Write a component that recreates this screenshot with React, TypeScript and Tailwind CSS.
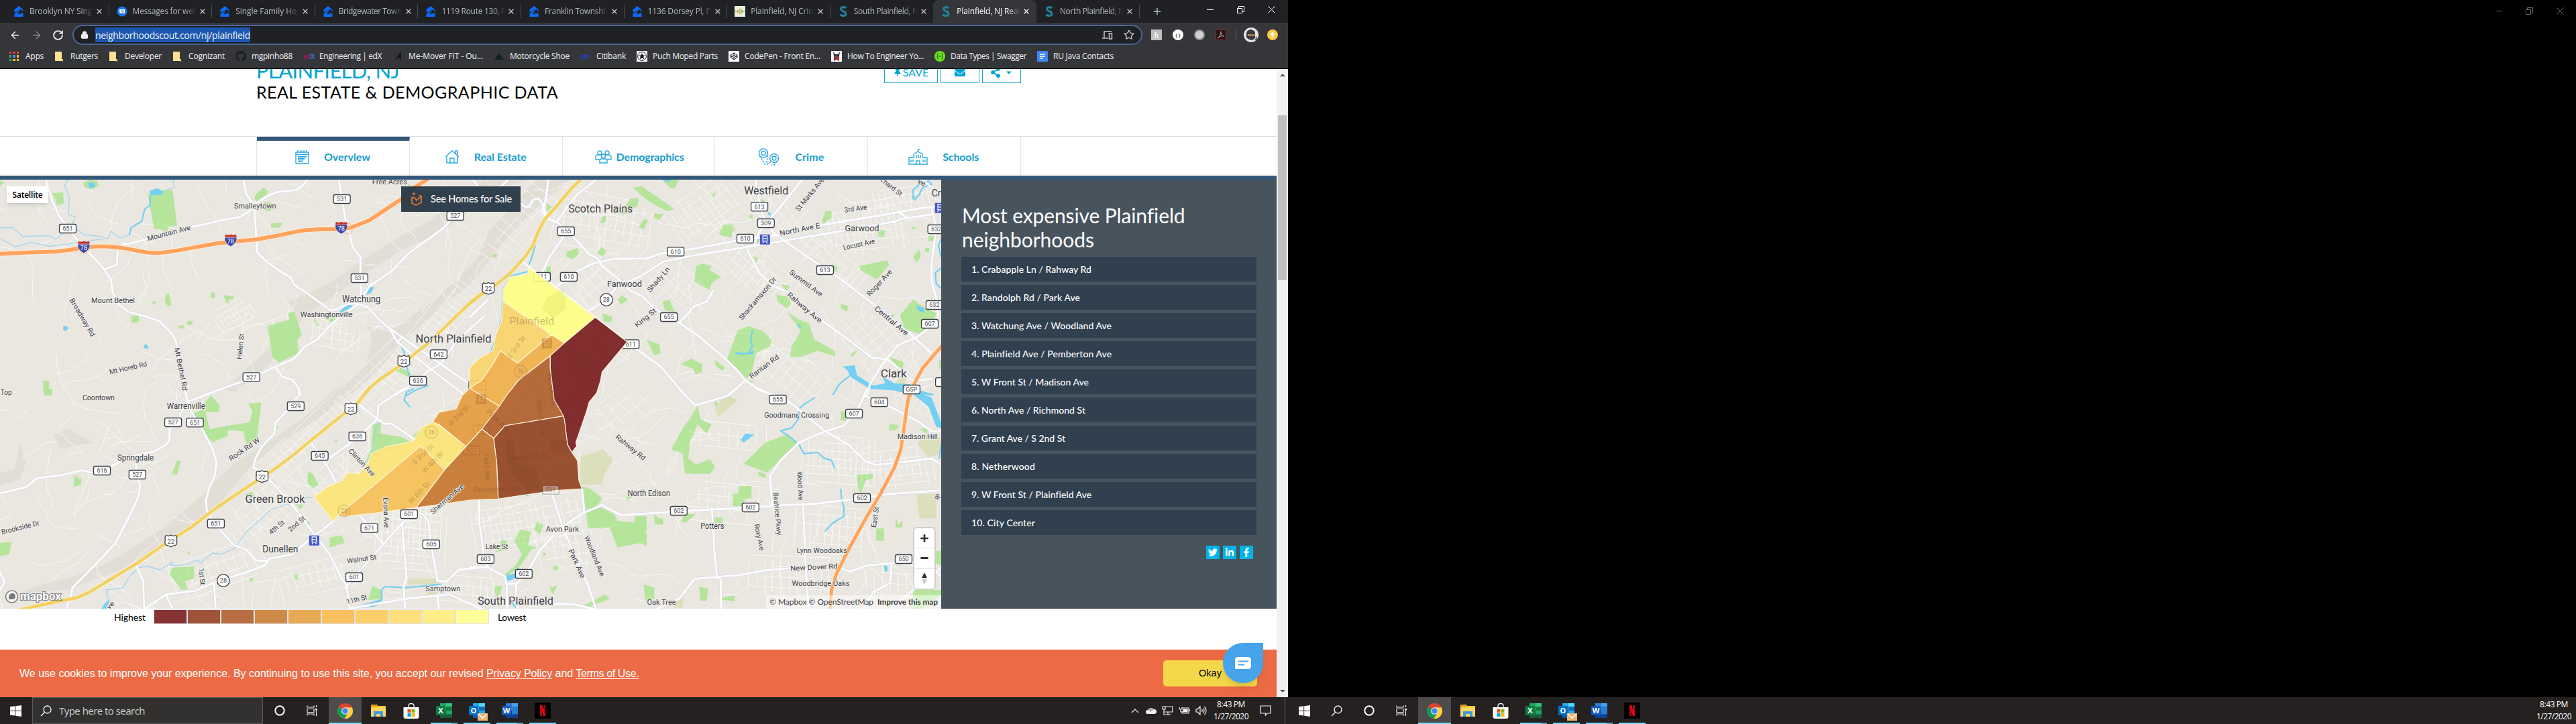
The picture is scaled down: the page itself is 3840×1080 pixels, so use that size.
import { useLayoutEffect, useRef, useState } from "react";
import type { ReactNode } from "react";
import { FaLinkedinIn, FaFacebookF, FaTwitter, FaGithub, FaThumbtack, FaEnvelope, FaShareAlt, FaCaretDown } from "react-icons/fa";
import { Star, Lock, RotateCw, ArrowLeft, ArrowRight, X, Plus } from "lucide-react";

const UI = "font-['Open_Sans','Noto_Sans',sans-serif]";
const LATO = "font-[Lato,sans-serif]";

/** Text tracked so that it fills a given width. */
function Fit({ w, className = "", children }: { w: number; className?: string; children: string }) {
  const ref = useRef<HTMLSpanElement>(null);
  const [ls, setLs] = useState(0);
  useLayoutEffect(() => {
    const natural = ref.current?.getBoundingClientRect().width ?? w;
    setLs((w - natural) / children.length);
  }, []);
  return (
    <span ref={ref} className={"whitespace-nowrap " + className} style={{ letterSpacing: ls }}>
      {children}
    </span>
  );
}

/* ---------------- Browser chrome ---------------- */

function Zillow() {
  return (
    <svg viewBox="0 0 16 16" className="size-4 shrink-0">
      <path d="M8 0 14.500 5.500V8.500L11.500 5 5 8.500 1.500 9V5.500Z" fill="#0b6cff" />
      <path d="M1.500 11 10 7 5.500 12.500 14.500 10.500V16H1.500Z" fill="#0b6cff" />
    </svg>
  );
}
function MsgIcon() {
  return (
    <svg viewBox="0 0 16 16" className="size-4 shrink-0">
      <circle cx="8" cy="8" r="7.6" fill="#1a73e8" />
      <path d="M4 5h8v6H6l-2-1.5Z" fill="#fff" />
      <path d="M6 7h5M6 9h5" stroke="#1a73e8" strokeWidth=".8" />
    </svg>
  );
}
function BarsIcon() {
  return (
    <svg viewBox="0 0 16 16" className="size-4 shrink-0">
      <rect width="16" height="16" fill="#e9f3dc" />
      <path d="M2 7v2M5 6v4M11 5v6M14 7v2" stroke="#6b9b3f" strokeWidth="1.3" />
      <path d="M8 3.5v9M5 6v3" stroke="#ef8a3c" strokeWidth="1.3" />
    </svg>
  );
}
function SIcon() {
  return (
    <svg viewBox="0 0 16 16" className="size-4 shrink-0">
      <path d="M12.4 3.2C10.4 1 4.6 .9 4.6 4.400c0 3.600 7.4 3 7.4 7 0 3.8-6 3.8-8.6 1.400" fill="none" stroke="#1e8099" strokeWidth="3.2" />
    </svg>
  );
}

const tabs: { icon: ReactNode; title: string; w: number; active?: boolean }[] = [
  { icon: <Zillow />, title: "Brooklyn NY Sing", w: 93 },
  { icon: <MsgIcon />, title: "Messages for wel", w: 93 },
  { icon: <Zillow />, title: "Single Family Ho", w: 91 },
  { icon: <Zillow />, title: "Bridgewater Town", w: 94 },
  { icon: <Zillow />, title: "1119 Route 130, P", w: 96 },
  { icon: <Zillow />, title: "Franklin Townshi", w: 90 },
  { icon: <Zillow />, title: "1136 Dorsey Pl, P", w: 94 },
  { icon: <BarsIcon />, title: "Plainfield, NJ Crim", w: 97 },
  { icon: <SIcon />, title: "South Plainfield, N", w: 96 },
  { icon: <SIcon />, title: "Plainfield, NJ Real", w: 94, active: true },
  { icon: <SIcon />, title: "North Plainfield, N", w: 96 },
];

function RestoreIcon() {
  return (
    <svg viewBox="0 0 11 11" className="size-[11px]" fill="none" stroke="currentColor">
      <path d="M.5 3.5h7v7h-7zM2.5 3.5v-3h8v8h-3" />
    </svg>
  );
}

function WindowButtons({ className }: { className: string }) {
  return (
    <div className={"flex items-center " + className}>
      <svg viewBox="0 0 10 11" className="h-[11px] w-2.5"><path d="M0 5.5h10" stroke="currentColor" /></svg>
      <RestoreIcon />
      <svg viewBox="0 0 11 11" className="size-[11px]"><path d="m.5.5 10 10m0-10-10 10" stroke="currentColor" /></svg>
    </div>
  );
}

function TabStrip() {
  return (
    <div className="flex h-[34px] bg-[#202124] pl-[9px]">
      {tabs.map((t, i) => (
        <div key={i} className={"relative flex h-[34px] w-[153.6px] shrink-0 items-center pl-[11px] " + (t.active ? "rounded-t-lg bg-[#35363a]" : "")}>
          {t.icon}
          <div className={"ml-2 w-[98px] whitespace-nowrap text-[12px] [mask-image:linear-gradient(90deg,#000_78%,transparent_97%)] " + (t.active ? "text-white" : "text-[#b4b7bb]")}>
            <Fit w={t.w}>{t.title}</Fit>
          </div>
          <X className={"size-3 shrink-0 " + (t.active ? "text-white" : "text-[#c3c6ca]")} strokeWidth={2.6} />
          {!t.active && i !== 8 && <div className="ml-auto h-5 w-px bg-[#4a4c50]" />}
        </div>
      ))}
      <div className="flex w-[60px] items-center pl-[18px] text-[#c3c6ca]"><Plus className="size-4" strokeWidth={2} /></div>
      <WindowButtons className="ml-auto h-7 gap-[35px] pr-[19px] text-white" />
    </div>
  );
}

function Toolbar() {
  return (
    <div className="flex h-[36px] items-center bg-[#35363a] text-[#f1f3f4]">
      <ArrowLeft className="ml-3.5 size-[17px]" />
      <ArrowRight className="ml-[15px] size-[17px] text-[#86888c]" />
      <RotateCw className="ml-[15px] size-[17px]" strokeWidth={2.6} />
      <div className="ml-[13px] flex h-[30px] w-[1595px] items-center rounded-full border-2 border-[#4a6596] bg-[#202124]">
        <Lock className="ml-2.5 size-3" fill="#e8eaed" strokeWidth={2.5} />
        <div className="ml-[10px] flex h-[22px] w-[231px] items-center bg-[#1b57b0] text-[14px]">
          <Fit w={231}>neighborhoodscout.com/nj/plainfield</Fit>
        </div>
        <svg viewBox="0 0 16 14" className="ml-auto h-3.5 w-4" fill="none" stroke="#c9cbcf" strokeWidth="1.5"><path d="M14 2H3v9M0 12h9M10.5 5h4v8h-4z" /></svg>
        <Star className="mr-2.5 ml-4 size-4 text-[#c9cbcf]" />
      </div>
      <div className="ml-[13px] flex size-4 items-center justify-center bg-[#bfbfbf] font-serif text-[13px] italic leading-none text-white">h</div>
      <div className="ml-4 flex size-4 items-center justify-center rounded-full bg-white text-[8px] text-black">{"{·}"}</div>
      <div className="ml-4 size-4 rounded-full border-2 border-[#8d8d8d] bg-[#d2d2d2]" />
      <div className="ml-4 flex size-4 items-center justify-center border border-[#8d2a26] bg-[#2a1616]">
        <svg viewBox="0 0 12 12" className="size-3" fill="none" stroke="#aaa"><path d="M1 11C4 9 6 5 6 1c0 4 2 7 5 7-4-1-6 0-10 3" /></svg>
      </div>
      <div className="ml-[14px] h-4 w-px bg-[#5f6165]" />
      <svg viewBox="0 0 22 22" className="ml-[11px] size-[22px]">
        <circle cx="11" cy="11" r="11" fill="#e4e4e4" />
        <path d="M4 9a6 5.500 0 0 1 13 0v7l-4 3-5-1-4-3Z" fill="#3a3a3e" /><path d="M6 10h10v3H6z" fill="#d9a26b" /><path d="M7 11.200h8" stroke="#333" /><path d="M18 14q2 3-1 5" stroke="#2c2c2f" strokeWidth="1.500" fill="none" />
      </svg>
      <svg viewBox="0 0 16 16" className="ml-[13px] size-4"><circle cx="8" cy="8" r="8" fill="#f9c846" /><path d="M8 3.5 12 8H9.4v4H6.6V8H4Z" fill="#fff" /></svg>
    </div>
  );
}

const appColors = ["bg-[#e5453a]", "bg-[#e5453a]", "bg-[#e5453a]", "bg-[#3fa557]", "bg-[#4687f1]", "bg-[#f4bd2a]", "bg-[#3fa557]", "bg-[#f4bd2a]", "bg-[#f4bd2a]"];
function Folder() {
  return (
    <svg viewBox="0 0 14 16" className="mr-0.5 h-4 w-3.5"><path d="M1 1h10v11l2 1v2H1Z" fill="#fde293" /><path d="M11 12v4l2-1v-3Z" fill="#e6c15a" /></svg>
  );
}
const bookmarks: { icon: ReactNode; label: string; w: number }[] = [
  { icon: <div className="mr-0.5 grid size-3.5 grid-cols-3 gap-[2px]">{appColors.map((c, i) => <i key={i} className={c} />)}</div>, label: "Apps", w: 27 },
  { icon: <Folder />, label: "Rutgers", w: 41 },
  { icon: <Folder />, label: "Developer", w: 55 },
  { icon: <Folder />, label: "Cognizant", w: 54 },
  { icon: <FaGithub className="size-4 text-[#1b1c1e]" />, label: "mgpinho88", w: 61 },
  { icon: <div className="flex w-4 text-[10px] font-bold leading-4 tracking-[-1px]"><b className="text-[#8f1f4a]">ed</b><b className="text-[#1d72b8]">X</b></div>, label: "Engineering | edX", w: 93 },
  { icon: <svg viewBox="0 0 14 16" className="size-4"><path d="M12 1v12L7 10 1 14Z" fill="#151617" /></svg>, label: "Me-Mover FIT - Ou...", w: 111 },
  { icon: <svg viewBox="0 0 16 16" className="size-4"><path d="m8 3 7 10H1Z" fill="#12231f" /></svg>, label: "Motorcycle Shoe", w: 89 },
  { icon: <div className="w-4 text-[11px] font-bold italic leading-4 tracking-[-1px] text-[#2a3fb8]">citi</div>, label: "Citibank", w: 44 },
  { icon: <svg viewBox="0 0 16 16" className="size-4"><rect width="16" height="16" fill="#fff" /><circle cx="8" cy="8" r="6.4" fill="none" stroke="#111" /><path d="m8 3 1.4 3.4H13l-2.8 2.2 1 3.8L8 10.200l-3.200 2.200 1-3.800L3 6.400h3.600Z" fill="#111" /></svg>, label: "Puch Moped Parts", w: 97 },
  { icon: <svg viewBox="0 0 16 16" className="size-4"><rect width="16" height="16" fill="#fff" /><path d="m8 3 5 3.300v3.400L8 13 3 9.700V6.300ZM3 6.300l5 3.400 5-3.400M3 9.700l5-3.400 5 3.400M8 3v3.300M8 9.700V13" fill="none" stroke="#111" /></svg>, label: "CodePen - Front En...", w: 113 },
  { icon: <svg viewBox="0 0 16 16" className="size-4"><rect width="16" height="16" fill="#fff" /><path d="m3 1 3 4h4l3-4-1 7H4Z" fill="#333" /><path d="M4 8h8v7l-4-2-4 2Z" fill="#b02a33" /><path d="M6 7h4v3H6z" fill="#555" /></svg>, label: "How To Engineer Yo...", w: 114 },
  { icon: <svg viewBox="0 0 16 16" className="size-4"><circle cx="8" cy="8" r="8" fill="#6de018" /><path d="M6 4c-3 0 0 3-2.500 4C6 9 3 12 6 12M10 4c3 0 0 3 2.500 4-2.500 1 .5 4-2.500 4M6 8h4" fill="none" stroke="#173647" /></svg>, label: "Data Types | Swagger", w: 113 },
  { icon: <svg viewBox="0 0 16 16" className="size-4"><rect width="16" height="16" rx="1" fill="#4285f4" /><path d="M4 5h8M4 8h8M4 11h5" stroke="#fff" strokeWidth="1.500" /></svg>, label: "RU Java Contacts", w: 90 },
];

function BookmarkBar() {
  return (
    <div className="flex h-[33px] items-center gap-4 border-b border-black bg-[#35363a] pb-1 pl-[14px] text-[12px] text-[#f1f3f4]">
      {bookmarks.map((b) => (
        <div key={b.label} className="flex items-center gap-2">
          {b.icon}
          <Fit w={b.w}>{b.label}</Fit>
        </div>
      ))}
    </div>
  );
}

/* ---------------- Map ---------------- */

type CropId = "A" | "B" | "C" | "D";
const K = 720 / 1568;
const origin: Record<CropId, [number, number]> = { A: [0, 260], B: [700, 260], C: [0, 580], D: [700, 580] };
const tile = (c: CropId) => `translate(${origin[c][0]} ${origin[c][1]}) scale(${K} ${1 / 3})`;
const px = (c: CropId, x: number) => origin[c][0] + x * K;
const py = (c: CropId, y: number) => origin[c][1] + y / 3;

const roads: Record<CropId, string[]> = {
  A: [
    "148,24 160,75 170,120 190,180 215,230 240,275 272,330 310,380 338,425 360,470 366,530 385,580 415,615 470,635 515,655 550,700 570,740 575,780 600,965",
    "338,425 380,405 382,330 395,315 430,308 500,280 580,255 620,235 660,225 720,205 780,190 810,165 830,130 870,95 900,80 960,70 985,48 997,24",
    "790,24 800,90 825,140 830,240 835,350 870,395 910,435 945,462 955,495 1000,535 1075,610 1100,600 1130,580 1165,578",
    "1100,24 1110,110 1120,190 1145,325 1170,370 1170,470 1172,540",
    "1568,110 1480,180 1440,240 1330,350 1270,435 1200,500 1175,550 1165,580",
    "1165,580 1130,610 1085,660 1055,700 1030,740 990,770 955,825 895,860 800,920 660,990",
    "895,865 915,905 950,920 970,960 975,990",
    "1165,580 1195,595 1230,650 1265,690 1290,750 1350,820 1510,990",
    "1270,695 1400,820 1568,980", "1305,730 1290,752",
    "1568,640 1480,750 1430,850 1390,880 1350,930 1280,990", "1440,690 1490,760",
  ],
  B: [
    "255,24 250,90 240,150 255,200 285,215 330,270 390,360 415,375 430,410 480,465 520,520 560,545 600,600 680,665 740,720 830,825 870,880 895,920 930,955 990,990",
    "412,24 350,90 320,140 285,210", "305,280 260,370 235,440", "165,385 190,410 408,640 540,780 620,860 700,990",
    "0,640 60,560", "390,610 440,565 480,500 550,460 630,390 740,360 900,325 1030,295 1160,265 1380,212 1400,200 1500,180",
    "285,500 340,440 400,400 470,378 575,377 620,355 740,330 860,298 930,285 1010,270 1140,228 1350,180 1390,170 1470,150 1520,145",
    "1390,165 1420,195", "928,24 935,80 950,180 970,225", "1080,24 1000,160 975,200 940,260 920,320",
    "970,225 985,260 1050,325 1130,400 1200,465 1320,590 1400,680 1450,740 1500,800",
    "900,335 940,440 985,500 1040,530 1150,660 1230,740 1310,825", "1310,820 1360,830 1420,900 1440,925 1500,915",
    "1500,150 1515,240 1500,400 1500,480 1520,580 1520,640 1490,690 1450,730 1390,765 1340,850 1300,940 1290,990",
    "680,665 730,590 770,570 790,520", "895,920 870,955 840,985", "155,120 180,145 195,145 205,115 225,108 240,140 235,170 265,205",
    "10,24 50,90", "125,24 90,70", "1470,24 1500,60 1531,80",
  ],
  C: [
    "720,0 605,60 570,160 550,180 550,230 540,250 500,280 420,305 350,355 300,375 265,365 205,385 120,400 85,440 0,468",
    "598,0 620,100 660,190 690,270 703,330 697,390 680,440 668,500 672,550 700,610 760,700 800,720 830,768 865,770",
    "970,0 970,30 930,100 895,150 890,200 850,260 830,310 822,350 870,400 950,520 1025,660 1070,740 1110,850 1125,880 1135,984",
    "440,320 445,390 455,430 450,480 420,570 375,690 300,800 235,890 232,920 215,984",
    "470,984 540,920 630,905 690,870 800,820 860,790 875,760 950,740 1000,680 1080,595",
    "1165,70 1225,135 1250,158 1270,155 1340,220 1365,250", "1310,0 1228,75 1225,135 1160,220 1060,320", "1010,240 1060,340 1090,415",
    "1170,570 1245,695", "1370,560 1390,590 1400,700 1420,860 1450,862 1490,810 1568,798",
    "1350,540 1300,610 1245,695 1120,890", "1305,600 1320,850 1310,880 1315,984", "1135,984 1250,955 1330,938 1460,920 1560,984",
    "440,785 465,860 468,984", "0,820 15,865 0,900", "540,925 560,984", "695,870 700,984", "1420,920 1425,984",
  ],
  D: [
    "680,0 730,72 750,68 840,30 865,0", "930,0 1000,35 1050,70 1100,130 1155,190 1230,250 1285,325 1320,340 1390,330 1500,312 1531,340",
    "1290,0 1265,80 1215,165 1155,190 1070,240 1010,320 975,390 982,520", "1280,30 1380,90 1460,150 1500,190 1531,189",
    "320,600 370,555 430,520 490,565 650,552 780,540 870,535 1000,522 1120,515 1240,495 1370,470 1531,455",
    "320,600 270,660 230,720 200,790 155,870 120,875 115,840 60,800 0,798", "365,450 373,555", "268,470 300,610 345,760 385,880 410,984",
    "787,540 795,730 803,845 815,850 817,984", "1083,520 1090,760 1100,984", "610,984 680,940 730,850 880,833 960,812 1040,803",
    "1200,800 1235,818 1290,790 1380,780 1440,775", "1370,785 1365,870 1310,910 1280,984", "30,500 32,600 50,780 60,800",
    "120,875 122,984", "150,875 155,984", "270,965 340,965 400,984", "0,960 40,984", "1531,800 1515,820 1531,840", "1440,900 1370,984",
  ],
};

const greens: Record<CropId, string[]> = {
  A: [
    "500,75 560,70 575,230 545,235 545,262 520,245 500,245 490,165 480,90", "170,85 205,80 207,130 185,140 178,105", "270,40 290,24 315,30 320,50 300,68 275,58",
    "830,90 855,60 870,75 868,100 835,128 826,110", "868,680 900,665 940,650 935,620 955,615 980,720 965,740 970,800 905,842 885,820", "538,540 548,530 557,585 545,590 535,570",
    "880,220 920,215 905,240 880,238", "685,528 698,530 697,555 685,553", "725,540 760,545 755,560 740,562 745,580 735,575", "425,635 450,630 452,660 428,665",
    "580,678 598,675 597,690 580,690", "605,660 625,655 625,672 610,675", "138,925 160,925 160,960 170,990 145,990", "1065,645 1085,640 1090,660 1070,662",
    "1300,865 1335,890 1330,910 1285,880", "855,125 880,125 880,165 862,165", "0,26 15,40 0,52", "495,568 508,570 505,582 495,578", "1020,645 1030,660 1020,665", "1025,665 1038,672 1030,680", "1325,40 1332,50 1325,55",
  ],
  B: [
    "530,60 560,55 665,155 640,165 580,120", "520,110 550,105 545,140 505,180 490,175", "430,190 445,185 440,215 425,220", "600,175 630,180 615,205 598,195",
    "565,200 580,205 565,245 548,240", "315,345 350,330 355,355 335,382 315,370", "430,325 445,345 430,368 413,350", "735,410 755,400 785,410 780,430 815,460 785,490 780,518 730,480",
    "825,225 855,225 850,285 808,270", "1155,165 1175,165 1175,195 1150,220 1143,210", "1265,410 1355,385 1362,405 1322,470 1270,430",
    "1440,560 1480,600 1515,620 1500,690 1460,715 1410,690 1398,630", "1070,650 1100,665 1120,740 1185,790 1185,815 1130,790 1070,820 1040,815 1045,770 1075,700 1030,615",
    "870,700 905,680 950,700 980,740 975,770 930,800 915,890 895,920 835,830", "995,540 1030,545 1045,580 1030,600 1000,570", "685,850 720,825 755,850 755,885 735,895 725,870",
    "575,740 615,760 620,800 600,810", "795,830 830,865 820,878 800,860", "1365,820 1410,840 1405,870 1370,850", "1240,800 1260,785 1250,810 1238,818", "480,560 495,540 512,560 492,585",
    "625,570 650,560 665,615 635,610", "1205,580 1230,590 1225,615 1205,600", "1440,370 1460,335 1465,370 1450,395", "1325,250 1350,250 1345,280 1328,280", "75,360 90,355 88,370 75,372",
    "250,125 268,150 250,165", "920,365 938,375 930,395", "1010,490 1040,500 1030,525", "430,620 465,640 460,660 435,660", "625,24 680,24 665,65 650,60", "905,185 918,180 920,200 910,195",
    "945,110 960,120 950,130", "250,415 262,410 265,440 248,440", "1435,100 1450,95 1445,115", "785,90 800,80 795,105", "1490,275 1510,275 1508,298 1490,298", "1480,330 1495,330 1490,350 1478,345", "1525,830 1531,830 1531,880 1522,860",
    "1180,405 1195,415 1190,440 1178,430", "1140,330 1150,335 1145,345", "930,285 945,290 935,310", "1435,230 1450,240 1440,250", "1370,625 1380,630 1370,645", "905,920 920,925 915,938",
  ],
  C: [
    "805,65 848,62 835,220 800,250 790,190 740,185 740,210 690,240 655,190 625,110 665,90 680,180 740,165 810,150 820,100", "665,60 685,30 715,75 710,105 670,105", "575,320 587,325 575,385 558,380",
    "240,395 265,400 262,430 238,440", "1000,370 1015,380 1035,430 1015,445 998,420", "1210,160 1237,150 1235,200 1300,215 1340,240 1220,290 1185,330 1205,270", "560,800 630,795 630,850 600,860 610,900 590,900 550,830",
    "1070,665 1110,655 1118,690 1070,710", "1210,880 1235,900 1240,940 1195,945", "808,850 822,845 822,862 808,862", "955,832 968,832 966,855 955,850", "0,690 38,685 30,740 0,750", "140,0 170,0 170,30 145,28",
    "990,600 1003,592 1008,605 996,612", "1085,230 1098,225 1092,240", "605,725 618,735 612,745", "960,515 985,520 975,540", "795,470 820,460 825,485 805,490", "1340,210 1390,150 1365,180 1345,235", "885,160 905,170 900,180",
  ],
  D: [
    "740,75 712,140 690,180 655,270 690,290 700,380 780,380 798,350 780,315 735,340 710,310 715,240 740,160 770,200 785,160 750,135", "960,240 1030,205 1070,245 1000,330 965,375 890,335",
    "365,435 395,450 430,490 415,525 470,560 480,590 540,600 575,650 575,705 555,690 480,710 455,620 385,625", "875,435 915,435 915,490 895,495 885,525 855,525 855,470 870,470",
    "1258,385 1310,380 1310,400 1285,410 1270,470 1260,440", "1320,625 1345,625 1345,680 1320,680", "165,630 200,640 190,700 220,710 200,720 160,800 120,840 110,835 150,790 170,740 145,680",
    "565,875 600,890 600,940 570,950", "745,885 775,895 770,950 750,950", "370,970 440,920 455,940 400,970 380,984", "220,595 240,610 230,650 208,630", "700,560 735,560 700,600 685,595",
    "1385,575 1390,610 1405,590 1405,620 1382,620", "600,560 615,580 628,580 628,608 600,605", "795,575 822,575 820,600 795,600", "1365,155 1395,165 1385,185 1360,185", "1440,900 1531,900 1531,920 1470,984 1440,984",
    "1515,725 1531,725 1531,790 1512,780", "105,675 120,680 125,720 85,730", "80,885 105,880 100,920 85,930", "275,790 290,800 280,815 270,805", "820,935 860,925 860,950 820,945", "935,370 960,380 960,400 940,390",
    "535,570 575,570 575,640 538,640", "1205,100 1220,105 1222,145 1205,140", "515,450 530,480 510,500", "240,730 250,740 240,750", "1460,180 1490,175 1485,200", "795,55 805,60 805,75 795,75", "260,890 285,880 270,920",
  ],
};

const olives: Record<CropId, string[]> = {
  A: [],
  B: ["845,235 865,240 860,260 845,255", "1400,905 1420,920 1410,945 1385,930"],
  C: ["1325,850 1425,850 1425,875 1325,875", "1385,905 1420,905 1420,925 1385,922", "235,385 258,385 255,400 238,400"],
  D: ["430,270 465,310 460,340 440,375 430,430 360,430 360,300 395,290", "1470,200 1530,220 1530,290 1490,305 1455,250", "840,30 870,50 810,125 795,90 815,50", "1450,470 1515,470 1515,580 1460,580", "670,940 695,935 690,980 665,980"],
};

const lakes: Record<CropId, string[]> = {
  A: ["285,40 305,35 310,55 290,62", "485,75 510,62 528,75 525,92 490,95", "1188,540 1200,505 1215,505 1205,530", "1100,620 1130,575 1145,580 1140,605 1118,610 1090,645", "205,680 215,678 222,690 212,702 205,695", "467,765 475,760 483,780 467,778"],
  B: [
    "1210,860 1250,855 1258,900 1310,945 1350,935 1340,905 1380,935 1430,940 1440,960 1510,985 1500,990 1405,970 1300,960 1240,910 1225,875", "1450,585 1475,600 1475,620 1455,610",
    "860,795 905,800 925,785 920,805 870,808", "965,165 978,175 975,190", "1060,670 1075,675 1075,690", "625,24 655,24 645,35",
  ],
  C: ["1135,984 1240,940 1238,960 1215,975", "340,960 358,940 345,984 330,984"],
  D: ["1360,0 1410,0 1450,10 1500,40 1531,150 1531,175 1515,170 1490,80 1440,25 1400,15", "880,230 895,200 925,205 910,220 890,240", "120,835 150,825 155,800 160,800 155,845 120,862", "1345,790 1358,795 1355,820 1348,815", "175,475 195,470 190,482"],
};

const streams: Record<CropId, string[]> = {
  A: ["487,100 487,140 470,155 460,210 425,240 420,270", "1300,760 1313,800 1310,840", "1320,860 1330,905", "1390,945 1350,965 1320,990"],
  B: ["918,700 912,740 918,770 905,800", "1440,110 1440,70 1460,45 1490,30 1500,45 1470,60 1460,90 1445,115", "1245,860 1235,900 1200,940 1180,985", "213,320 200,380 190,410", "1531,420 1512,440 1515,490 1531,510", "1531,290 1522,320 1531,370", "135,455 190,435", "130,460 108,520 105,640 90,720 70,790"],
  C: ["1342,0 1320,15 1312,50 1330,80", "1240,940 1238,900 1250,885 1320,890 1430,875"],
  D: ["1120,40 1085,70 1070,90 1070,130 1045,175 1010,188 1035,210 1070,250 1085,290 1130,285 1150,310 1175,320 1185,355", "1205,450 1208,500 1215,530 1215,570 1180,600 1155,635", "135,955 155,984", "1531,250 1525,310"],
};
const faintStreams: Record<CropId, string[]> = {
  A: ["0,240 40,238 75,278 160,275 180,290 230,240 245,190 222,180 225,100 210,50 220,24", "0,285 50,325 100,305 160,322 230,310 330,290 350,285 360,255 390,285 420,270", "528,75 565,60 562,24", "245,240 270,270 335,280"],
  B: [],
  C: ["345,900 400,890 420,840 450,800 480,795 520,810 560,775 555,790 580,790 610,785 640,765 650,780 690,735 720,740 760,715 800,640 850,580 880,540 950,510 985,490 1020,485", "345,900 350,940", "1225,150 1215,210 1213,280 1190,330"],
  D: [],
};

const overlays: [string, string][] = [
  ["190,415 408,640 308,755 265,718 108,568 108,520 130,460 190,445", "#feff82"],
  ["108,568 265,718 155,845 100,790 75,850 40,920 0,958 0,865 30,825 75,790 85,720 103,660", "#fbd468"],
  ["100,790 155,845 265,718 308,755 262,812 160,920 120,990 97,1038 0,958 40,920 75,850", "#f2ae46"],
  ["0,958 97,1038 40,1140 -12,1218 -99,1120 -120,1108 -99,1065 -44,1050 -24,990", "#e49a3b"],
  ["262,812 262,870 270,960 275,1010 305,1082 115,1125 78,1182 40,1140 97,1038 120,990 160,920", "#ae5c27"],
  ["408,640 512,750 430,885 425,925 412,980 388,1020 380,1060 355,1160 345,1200 348,1215 332,1245 318,1210 305,1082 275,1010 262,870 262,812 308,755", "#77181b"],
  ["115,1125 305,1082 308,1100 318,1210 332,1245 350,1280 355,1370 365,1407 280,1415 130,1445 93,1453 88,1290 78,1182", "#91401e"],
  ["-12,1218 40,1140 78,1182 88,1290 93,1453 0,1458 -60,1470 -174,1492 -81,1322", "#c6742b"],
  ["-159,1215 -81,1322 -174,1492 -304,1515 -409,1532 -429,1528", "#f6c052"],
  ["-120,1108 -99,1122 -12,1218 -81,1322 -159,1215 -429,1528 -441,1555 -506,1445 -464,1400 -414,1370 -394,1335 -359,1340 -329,1290 -319,1250 -274,1220 -184,1195 -159,1135", "#fce473"],
];

/* [tile, centre x, centre y, width, text, font size, angle] */
type L = [CropId, number, number, number, string, number, number?];
const labels: L[] = [
  ["A", 828, 142, 63, "Smalleytown", 11.5], ["A", 367, 564, 65, "Mount Bethel", 11.5], ["A", 1173, 558, 57, "Watchung", 14], ["A", 1060, 628, 78, "Washingtonville", 11.5],
  ["A", 1265, 34, 52, "Free Acres", 11.5], ["A", 548, 262, 66, "Mountain Ave", 10.5, -15], ["A", 268, 640, 64, "Broadway Rd", 10.5, 59], ["A", 416, 866, 57, "Mt Horeb Rd", 10.5, -13],
  ["A", 780, 770, 38, "Helen St", 10.5, -84], ["A", 588, 872, 65, "Mt Bethel Rd", 10.5, 79], ["B", -52, 736, 113, "North Plainfield", 16],
  ["B", 425, 155, 96, "Scotch Plains", 16], ["B", 963, 72, 66, "Westfield", 16], ["B", 503, 488, 52, "Fanwood", 13.5], ["B", 1274, 240, 51, "Garwood", 13.5], ["B", 1377, 891, 39, "Clark", 17], ["B", 1515, 84, 14, "Cr", 15],
  ["B", 1104, 90, 61, "St Marks Ave", 10.5, -51], ["B", 1370, 55, 38, "chard St", 10.5, 38], ["B", 1253, 153, 34, "3rd Ave", 10.5, -8], ["B", 1072, 246, 61, "North Ave E", 11, -11], ["B", 1264, 313, 48, "Locust Ave", 10.5, -12],
  ["B", 613, 470, 45, "Shady Ln", 10.5, -49], ["B", 935, 555, 80, "Shackamaxon Dr", 10.5, -50], ["B", 1093, 487, 59, "Summit Ave", 10.5, 37], ["B", 1088, 596, 64, "Rahway Ave", 11, 40], ["B", 1330, 485, 50, "Roger Ave", 10.5, -47],
  ["B", 1370, 655, 62, "Central Ave", 11, 40], ["B", 571, 642, 38, "King St", 10.5, -40], ["B", 956, 860, 52, "Raritan Rd", 10.5, -37], ["B", 1468, 36, 12, "ve", 10.5, 30],
  ["C", 20, 15, 17, "Top", 11.5], ["C", 320, 40, 48, "Coontown", 11.5], ["C", 604, 76, 57, "Warrenville", 12], ["C", 440, 308, 54, "Springdale", 12], ["C", 893, 491, 89, "Green Brook", 16.5], ["C", 910, 718, 53, "Dunellen", 14],
  ["C", 793, 270, 53, "Rock Rd W", 10.5, -34], ["C", 66, 620, 58, "Brookside Dr", 10.5, -14], ["C", 898, 619, 27, "4th St", 10.5, -39], ["C", 963, 604, 30, "2nd St", 10.5, -40], ["C", 1174, 761, 44, "Walnut St", 10.5, -8],
  ["C", 1254, 554, 45, "Evona Ave", 10.5, 88], ["C", 656, 840, 25, "1st St", 10.5, 85], ["C", 1158, 942, 31, "11th St", 10.5, -14], ["C", 1438, 895, 52, "Samptown", 11.5], ["C", 1175, 329, 52, "Clinton Ave", 10.5, 46], ["C", 1451, 493, 62, "Sherman Ave", 10.5, -41], ["C", 358, 968, 12, "ve", 10.5, -45],
  ["D", 1062, 116, 97, "Goodmans Crossing", 11.5], ["D", 1454, 212, 60, "Madison Hill", 11.5], ["D", 582, 468, 63, "North Edison", 12], ["D", 788, 614, 35, "Potters", 12], ["D", 301, 628, 49, "Avon Park", 11.5], ["D", 88, 704, 34, "Lake St", 11.5],
  ["D", 149, 947, 113, "South Plainfield", 16.5], ["D", 623, 954, 43, "Oak Tree", 11.5], ["D", 1144, 723, 75, "Lynn Woodoaks", 11.5], ["D", 1118, 798, 70, "New Dover Rd", 10.5, -3], ["D", 1140, 871, 86, "Woodbridge Oaks", 11.5],
  ["D", 523, 262, 54, "Rahway Rd", 10.5, 39], ["D", 1074, 434, 43, "Wood Ave", 10.5, 87], ["D", 1000, 559, 64, "Beatrice Pkwy", 10.5, 85], ["D", 941, 664, 40, "Roxy Ave", 10.5, 78], ["D", 1316, 574, 31, "East St", 10.5, -82],
  ["D", 406, 748, 64, "Woodland Ave", 10.5, 68], ["D", 349, 782, 46, "Park Ave", 11, 66], ["D", 1520, 484, 8, "Br", 10.5, 35],
];
const faintLabels: L[] = [
  ["B", 202, 655, 67, "Plainfield", 15], ["B", 152, 772, 39, "E 3rd St", 10.5, -54], ["B", 348, 808, 50, "eland Ave", 10.5, 37], ["B", 268, 960, 50, "Woodla", 11, 82],
  ["D", 93, 144, 44, "Park Ave", 11, 45], ["D", 232, 128, 52, "Hillside Ave", 10.5, 84], ["D", 196, 303, 57, "Randolph Rd", 10.5, -5], ["D", 57, 350, 40, "Field Ave", 10.5, 86], ["D", 87, 449, 68, "Pemberton Ave", 10.5, -2], ["D", 292, 82, 30, "nd Ave", 11, 66],
  ["C", 1488, 120, 40, "W 2nd St", 10.5, -46], ["C", 1373, 292, 40, "S 2nd St", 10.5, -43], ["C", 1404, 328, 40, "W 4th St", 10.5, -46], ["C", 1360, 463, 41, "W 6th St", 10.5, -46],
];

const shields: [CropId, number, number, string][] = [
  ["A", 220, 243, "651"], ["A", 1110, 111, "531"], ["A", 1478, 186, "527"], ["A", 1167, 465, "531"], ["A", 816, 907, "527"], ["A", 1424, 805, "642"], ["A", 1357, 924, "636"],
  ["B", 941, 145, "613"], ["B", 962, 219, "509"], ["B", 895, 288, "610"], ["B", 669, 346, "610"], ["B", 313, 255, "655"], ["B", 322, 459, "610"], ["B", 1154, 429, "613"], ["B", 1515, 246, "632"], ["B", 1509, 585, "632"], ["B", 1494, 669, "607"],
  ["B", 647, 639, "655"], ["B", 1435, 963, "GSP"], ["B", 1540, 930, "6"],
  ["C", 562, 150, "527"], ["C", 633, 151, "651"], ["C", 960, 78, "529"], ["C", 1160, 213, "636"], ["C", 1038, 300, "645"], ["C", 331, 366, "616"], ["C", 446, 384, "527"], ["C", 701, 603, "651"], ["C", 1328, 561, "601"], ["C", 1199, 623, "671"],
  ["C", 1400, 696, "605"], ["C", 1150, 843, "601"],
  ["D", 1001, 48, "655"], ["D", 1330, 60, "604"], ["D", 1248, 111, "607"], ["D", 1274, 489, "602"], ["D", 912, 531, "602"], ["D", 679, 546, "602"], ["D", 1409, 762, "650"], ["D", 52, 762, "603"], ["D", 176, 828, "602"], ["D", 263, 452, "531"],
];
const coveredShields: [CropId, number, number, string][] = [["B", 235, 459, "611"], ["B", 523, 760, "611"], ["B", 25, 944, "620"], ["D", 39, 182, "601"], ["D", 6, 276, "603"]];

function rng(seed: number) {
  let s = seed;
  return () => ((s = (s * 16807) % 2147483647) / 2147483647);
}

/* Street grids: centre x, centre y, width, height, angle, spacing */
const grids: number[][] = [
  [645, 500, 200, 60, -53, 10], [560, 570, 150, 60, -45, 10], [480, 630, 170, 40, -45, 11], [900, 335, 150, 90, 10, 13], [1060, 310, 130, 70, -35, 10], [1120, 400, 160, 60, 42, 10], [1230, 380, 150, 70, 42, 11],
  [1290, 340, 110, 80, -8, 9], [1340, 300, 110, 40, -10, 9], [1180, 560, 130, 70, 40, 14], [1320, 520, 120, 90, 48, 13], [1255, 690, 120, 80, 3, 9], [1340, 700, 100, 60, -8, 10], [1240, 790, 110, 70, 5, 11], [760, 790, 110, 70, -10, 9],
  [840, 790, 90, 110, -12, 12], [615, 800, 110, 110, 4, 8], [520, 700, 120, 60, -45, 11], [400, 760, 130, 60, -43, 11], [330, 850, 150, 60, -20, 14], [880, 430, 100, 100, -40, 14], [1000, 420, 120, 60, 40, 12], [700, 880, 90, 40, 5, 10],
  [480, 860, 130, 50, -15, 12], [1180, 860, 130, 60, 2, 12], [1340, 870, 100, 60, 4, 12], [1080, 750, 110, 60, 4, 15], [930, 610, 90, 60, -42, 15], [1080, 650, 130, 40, 5, 14], [350, 470, 60, 40, -30, 7], [500, 500, 70, 40, 10, 10], [1370, 600, 60, 40, 40, 12],
  [780, 330, 120, 60, -50, 14], [1150, 320, 80, 50, 50, 10], [570, 740, 90, 40, -40, 9], [420, 690, 120, 50, -42, 12],
];

function minorStreets() {
  const r = rng(4177);
  let d = "";
  for (const [cx, cy, w, h, a, s] of grids) {
    const t = (a * Math.PI) / 180, c = Math.cos(t), n = Math.sin(t);
    const line = (x1: number, y1: number, x2: number, y2: number) => {
      d += `M${(cx + x1 * c - y1 * n).toFixed(1)} ${(cy + x1 * n + y1 * c).toFixed(1)}L${(cx + x2 * c - y2 * n).toFixed(1)} ${(cy + x2 * n + y2 * c).toFixed(1)}`;
    };
    for (let y = -h / 2; y <= h / 2; y += s * 1.3) line(-w / 2 + r() * w * 0.3, y, w / 2 - r() * w * 0.3, y + r() * 3);
    for (let x = -w / 2; x <= w / 2; x += s) line(x, -h / 2 + r() * h * 0.35, x + r() * 3, h / 2 - r() * h * 0.35);
  }
  for (let i = 0; i < 330; i++) {
    let x = r() * 1403, y = 268 + r() * 640, a = r() * 6.28;
    d += `M${x.toFixed(1)} ${y.toFixed(1)}`;
    const steps = 2 + Math.floor(r() * 5);
    for (let k = 0; k < steps; k++) {
      a += (r() - 0.5) * 1.1;
      const len = 8 + r() * 16;
      const mx = x + Math.cos(a) * len * 0.5 + (r() - 0.5) * 5, my = y + Math.sin(a) * len * 0.5 + (r() - 0.5) * 5;
      x += Math.cos(a) * len;
      y += Math.sin(a) * len;
      d += `Q${mx.toFixed(1)} ${my.toFixed(1)} ${x.toFixed(1)} ${y.toFixed(1)}`;
    }
  }
  return d;
}
const MINOR = minorStreets();
const tiles: CropId[] = ["A", "B", "C", "D"];

function Polys({ data, fill }: { data: Record<CropId, string[]>; fill: string }) {
  return <>{tiles.map((c) => <g key={c} transform={tile(c)} fill={fill}>{data[c].map((p) => <polygon key={p} points={p} />)}</g>)}</>;
}
function Lines({ data, stroke, w }: { data: Record<CropId, string[]>; stroke: string; w: number }) {
  return (
    <g fill="none" stroke={stroke} strokeWidth={w} strokeLinejoin="round" strokeLinecap="round">
      {tiles.map((c) => <g key={c} transform={tile(c)}>{data[c].map((p) => <polyline key={p} points={p} vectorEffect="non-scaling-stroke" />)}</g>)}
    </g>
  );
}
const one = (c: CropId, p: string[]): Record<CropId, string[]> => ({ A: [], B: [], C: [], D: [], [c]: p });
const i78 = one("A", ["-10,357 90,350 180,346 230,338 270,328 310,323 350,323 400,330 450,343 480,350 510,352 550,347 620,330 700,310 760,300 830,292 900,275 950,260 990,250 1040,246 1100,246 1140,238 1200,205 1260,150 1310,105 1345,60 1390,20"]);
const parkway: Record<CropId, string[]> = { A: [], C: [], B: ["1535,765 1500,820 1470,870 1450,920 1435,965 1430,990"], D: ["1430,0 1420,80 1410,180 1400,270 1380,350 1330,480 1290,570 1230,720 1190,830 1175,900 1170,990"] };
const us22: Record<CropId, string[]> = {
  A: ["1568,530 1530,570 1500,610 1440,690 1390,755 1340,810 1290,865 1230,920 1205,950 1180,990"],
  B: ["363,20 330,65 290,130 245,200 225,250 205,320 180,370 130,445 80,500 40,535 0,580"],
  C: ["1200,-5 1160,65 1100,130 1010,230 940,310 870,380 780,460 700,535 620,620 540,690 440,785 350,860 290,910 250,935 200,948 60,990"], D: [],
};

function Label({ l, faint }: { l: L; faint?: boolean }) {
  const [c, x, y, w, t, s, a = 0] = l;
  const X = px(c, x), Y = py(c, y);
  return (
    <text x={X} y={Y + s * 0.36} transform={a ? `rotate(${a} ${X} ${Y})` : undefined} textAnchor="middle" fontSize={s} textLength={w} lengthAdjust="spacingAndGlyphs"
      fill={faint ? "#5b3a1e" : "#3c4046"} fillOpacity={faint ? 0.33 : 1} stroke={faint ? "none" : "#f1efea"} strokeWidth={2} paintOrder="stroke" strokeLinejoin="round">
      {t}
    </text>
  );
}
function Shield({ s: [c, x, y, t] }: { s: [CropId, number, number, string] }) {
  return (
    <g transform={`translate(${px(c, x)} ${py(c, y)})`}>
      <rect x={-12.5} y={-6.5} width={25} height={13} rx={2.5} fill="#fff" stroke="#3b3e44" strokeWidth={1.3} />
      <text y={3.3} textAnchor="middle" fontSize={9} fill="#4a4d52">{t}</text>
    </g>
  );
}
function Train({ c, x, y, fill = "#4459c9", o = 1 }: { c: CropId; x: number; y: number; fill?: string; o?: number }) {
  return (
    <g transform={`translate(${px(c, x)} ${py(c, y)})`} opacity={o}>
      <rect x={-7.500} y={-7.5} width={15} height={15} rx={1} fill={fill} />
      <path d="M-3.200-5.500h6.400v8h-6.400zM-2 3.500-3.500 5.500M2 3.500 3.500 5.500M-3.200-1.500h6.400" fill="none" stroke={o < 1 ? "#e9a75a" : "#fff"} strokeWidth={1.200} />
    </g>
  );
}

function MapView() {
  return (
    <svg viewBox="0 268 1403 640" className="block h-[640px] w-[1403px]" fontFamily="Roboto, 'Open Sans', sans-serif">
      <rect y={268} width={1403} height={640} fill="#eae7e1" />
      <g fill="#dfdbd3" opacity={0.75}>
        <path d="M720 268 680 300 640 330 600 350 560 375 530 395 495 420 455 440 430 450 440 462 420 500 385 535 345 570 330 580 350 585 400 545 430 505 455 470 500 440 545 408 600 372 650 350 700 315 745 280 790 268Z" />
        <path d="M800 268 770 300 730 340 715 380 680 420 640 450 610 475 580 495 560 490 545 480 555 510 545 545 500 580 450 625 400 660 350 690 300 740 240 790 160 840 110 860 50 875 30 885 100 880 180 850 250 805 320 760 370 700 420 660 480 620 540 575 575 540 600 510 650 465 700 425 760 350 800 310 850 268Z" />
        <path d="M30 660 38 690 30 715 0 725 0 705 22 700Z" /><path d="M80 650 100 640 140 660 90 670Z" />
      </g>
      <path d={MINOR} fill="none" stroke="#f8f7f4" strokeWidth={1} />
      <Polys data={olives} fill="#dcdfbc" />
      <Polys data={greens} fill="#b5e59b" />
      <path d={MINOR} fill="none" stroke="#fff" strokeWidth={0.7} opacity={0.2} />
      <Polys data={lakes} fill="#74cff2" />
      <Lines data={faintStreams} stroke="#a3d4ee" w={1.3} />
      <Lines data={streams} stroke="#74cff2" w={2.2} />
      <Lines data={roads} stroke="#d8d9e6" w={4} />
      <Lines data={roads} stroke="#ffffff" w={2.8} />
      <g fill="none" stroke="#ffb27c" strokeWidth={1}><circle cx={125} cy={371} r={7} /><circle cx={518} cy={341} r={8} /></g>
      <Lines data={us22} stroke="#faf0cd" w={6} />
      <Lines data={us22} stroke="#f3d05f" w={4.400} />
      <Lines data={i78} stroke="#fdeede" w={8} />
      <Lines data={i78} stroke="#ffa35c" w={5.800} />
      <Lines data={parkway} stroke="#fdeede" w={7} />
      <Lines data={parkway} stroke="#ffa35c" w={5} />
      {coveredShields.map((s, i) => <Shield key={i} s={s} />)}
      <g transform={tile("B")} stroke="#fff4dc" strokeWidth={1.2} strokeLinejoin="round">
        {overlays.map(([p, f]) => <polygon key={p} points={p} fill={f} fillOpacity={0.9} vectorEffect="non-scaling-stroke" />)}
      </g>
      <path fill="#c9d84a" opacity={0.22} d="M815 445 840 430 845 460 825 475 808 462Z" />
      <path fill="#5b3a1e" opacity={0.14} d="M754 655 765 658 770 690 800 700 808 725 790 735 765 710 755 690ZM820 657h25v18h-25Z" />
      {faintLabels.map((l, i) => <Label key={i} l={l} faint />)}
      <g fill="none" stroke="#7a5a30" strokeOpacity={0.4}>
        <circle cx={776} cy={554} r={9} /><circle cx={643} cy={645} r={9} /><circle cx={513} cy={762} r={9} />
      </g>
      <g fill="#6b4a25" fillOpacity={0.45} fontSize={9} textAnchor="middle"><text x={776} y={557}>28</text><text x={643} y={648}>28</text><text x={513} y={765}>28</text></g>
      <Train c="B" x={251} y={757} fill="#a8702f" o={0.45} /><Train c="D" x={38} y={47} fill="#a8702f" o={0.45} />
      {labels.map((l, i) => <Label key={i} l={l} />)}
      {shields.map((s, i) => i === shields.length - 1 ? <g key={i} opacity={0.35}><Shield s={s} /></g> : <Shield key={i} s={s} />)}
      <Train c="B" x={959} y={292} /><Train c="B" x={1527} y={151} /><Train c="C" x={1020} y={679} />
      {([["A", 272, 323], ["A", 749, 293], ["A", 1108, 237]] as [CropId, number, number][]).map(([c, x, y]) => (
        <g key={x} transform={`translate(${px(c, x)} ${py(c, y)})`}>
          <path d="M-8-8-4-7 0-8 4-7 8-8 9-3H-9Z" fill="#c9302c" />
          <path d="M-9-3.500H9C9.500 3 6 7 0 10-6 7-9.500 3-9-3.500Z" fill="#3c4ba8" stroke="#fff" strokeWidth={0.600} />
          <text y={5} textAnchor="middle" fontSize={9} fill="#fff">78</text>
        </g>
      ))}
      {([["A", 1311, 836], ["B", 61, 510], ["C", 1139, 89], ["C", 851, 392], ["C", 555, 680]] as [CropId, number, number][]).map(([c, x, y], i) => (
        <g key={i} transform={`translate(${px(c, x)} ${py(c, y)})`}>
          <path d="M-7.500-8-3.500-7 0-8.500 3.500-7 7.500-8 9-5C7.500-2 10 2 8.500 5 7 8 3 7 0 9-3 7-7 8-8.500 5-10 2-7.500-2-9-5Z" fill="#fff" stroke="#3b3e44" strokeWidth={1.300} />
          <text y={4} textAnchor="middle" fontSize={9.500} fill="#4a4d52">22</text>
        </g>
      ))}
      {([["B", 444, 561], ["C", 725, 858]] as [CropId, number, number][]).map(([c, x, y]) => (
        <g key={x} transform={`translate(${px(c, x)} ${py(c, y)})`}>
          <circle r={9.300} fill="#fff" stroke="#3b3e44" strokeWidth={1.300} /><text y={3.300} textAnchor="middle" fontSize={9} fill="#4a4d52">28</text>
        </g>
      ))}
      <g>
        <circle cx={17.500} cy={890} r={9} fill="#fff" fillOpacity={0.6} stroke="#858585" strokeWidth={1.600} />
        <path d="M13.500 894c-1.500-5 1-9 5-9a4.500 4.500 0 0 1 0 9Z" fill="#777" />
        <text x={30} y={895} fontSize={17} fontWeight={700} textLength={61} lengthAdjust="spacingAndGlyphs" fill="#fff" stroke="#858585" strokeWidth={2.200} paintOrder="stroke">mapbox</text>
      </g>
    </svg>
  );
}

/* ---------------- Page ---------------- */

const stroke = { fill: "none", stroke: "#2aa8e0", strokeWidth: 1.4 } as const;
const navTabs: { label: string; w: number; pad: string; gap: string; icon: ReactNode; active?: boolean }[] = [
  { label: "Overview", w: 69, active: true, pad: "pl-[57px]", gap: "gap-[22px]", icon: <svg viewBox="0 0 21 21" className="size-[21px]" {...stroke}><rect x="1" y="3" width="19" height="17" rx="1" /><path d="M1 6.500h19M4 0v4M9 0v4M13 0v4M17 0v4" /><path d="M4 10h13M4 13h10M4 16.500h8" strokeWidth="2" /></svg> },
  { label: "Real Estate", w: 78, pad: "pl-[52px]", gap: "gap-[22px]", icon: <svg viewBox="0 0 22 20" className="h-5 w-[22px]" {...stroke}><path d="M3 9.500V19h16V9.500M1 10 11 1l10 9M16 5V1h3v6M8 19v-7h6v7" /></svg> },
  { label: "Demographics", w: 101, pad: "pl-[48px]", gap: "gap-[7px]", icon: <svg viewBox="0 0 25 20" className="h-5 w-[25px]" {...stroke}><circle cx="7" cy="4" r="3" /><circle cx="18" cy="4" r="3" /><circle cx="12.500" cy="9" r="3" /><path d="M1 14V10q0-3 4-3h4M24 14V10q0-3-4-3h-4M1 14h6M24 14h-6M7 19v-3q0-3 3-3h5q3 0 3 3v3Z" /></svg> },
  { label: "Crime", w: 43, pad: "pl-[63px]", gap: "gap-[22px]", icon: <svg viewBox="0 0 34 27" className="h-[27px] w-[34px]" {...stroke}><circle cx="9" cy="7.500" r="6.500" /><circle cx="9" cy="7.500" r="3" /><circle cx="25" cy="15" r="6.500" /><circle cx="25" cy="15" r="3" /><path d="M3 11 12 25M15 10l-1 12M20 20l-6 5M29 20l-4 5h-4" strokeDasharray="3 1.500" /></svg> },
  { label: "Schools", w: 54, pad: "pl-[60px]", gap: "gap-[22px]", icon: <svg viewBox="0 0 29 24" className="h-6 w-[29px]" {...stroke}><path d="M1 23V13h7V8l6.500-4L21 8v5h7v10ZM14.500 4V.7h3M12 23v-5h5v5M4 16v4M7 16v4M22 16v4M25 16v4M12 9v5M15 9v5M18 9v5" /></svg> },
];

function NavTabs() {
  return (
    <div className="flex h-[65px] border-t border-[#dcdfe2] border-b-[6px] border-b-[#33587a] bg-white pl-[382px]">
      <div className="flex border-l border-[#e3e5e8]">
        {navTabs.map((t) => (
          <div key={t.label} className={"flex h-[58px] w-[227.800px] items-center border-r border-r-[#e3e5e8] " + t.pad + " " + t.gap + (t.active ? " border-t-[6px] border-t-[#33587a] pb-[4px]" : " pt-[2px]")}>
            {t.icon}
            <Fit w={t.w} className={LATO + " text-[16px] font-bold text-[#1b9dcf]"}>{t.label}</Fit>
          </div>
        ))}
      </div>
    </div>
  );
}

const hoods = ["Crabapple Ln / Rahway Rd", "Randolph Rd / Park Ave", "Watchung Ave / Woodland Ave", "Plainfield Ave / Pemberton Ave", "W Front St / Madison Ave", "North Ave / Richmond St", "Grant Ave / S 2nd St", "Netherwood", "W Front St / Plainfield Ave", "City Center"];
const hoodW = [179, 162, 209, 209, 175, 170, 140, 95, 179, 95];

function Sidebar() {
  return (
    <aside className={"h-[640px] w-[500px] bg-[#48545d] px-[30px] pt-[35px] text-white " + LATO}>
      <h2 className="pl-px text-[30px] leading-9">
        <Fit w={332}>Most expensive Plainfield</Fit><br />
        <Fit w={197}>neighborhoods</Fit>
      </h2>
      <ol className="mt-2 flex flex-col gap-[5px]">
        {hoods.map((h, i) => (
          <li key={h} className="flex h-[37px] w-[440px] items-center bg-[#30404f] pl-[15px] text-[14px] font-medium">
            <Fit w={hoodW[i]}>{`${i + 1}. ${h}`}</Fit>
          </li>
        ))}
      </ol>
      <div className="mt-4 flex justify-end gap-[5px] pr-[5px]">
        {[<FaTwitter className="size-3.5" />, <FaLinkedinIn className="size-3.5" />, <FaFacebookF className="size-3.5" />].map((ic, i) => (
          <div key={i} className="flex size-5 items-center justify-center bg-[#00b3e6]">{ic}</div>
        ))}
      </div>
    </aside>
  );
}

const legend = ["bg-[#873234]", "bg-[#9f5339]", "bg-[#b96d42]", "bg-[#d08a48]", "bg-[#e7a953]", "bg-[#f8c05f]", "bg-[#f9ce6b]", "bg-[#fddf7b]", "bg-[#feee8a]", "bg-[#ffff99]"];

function MapOverlays() {
  return (
    <>
      <div className="absolute top-[10px] left-[10px] flex h-[25px] w-[62px] items-center justify-center bg-white font-['Open_Sans',sans-serif] text-[12px] font-semibold text-black shadow-md">
        <Fit w={45}>Satellite</Fit>
      </div>
      <div className={"absolute top-[10px] left-[598px] flex h-[38px] w-[178px] items-center gap-[12px] bg-[#273744]/95 pl-3.5 text-white " + LATO}>
        <svg viewBox="0 0 18 20" className="h-5 w-[18px] shrink-0" fill="none" stroke="#e8762c" strokeWidth="1.700"><circle cx="5" cy="2" r="1" /><path d="M2 7v9l6 3 8-4V6l-4 3-3 3-3-4-4-1M16 6l-3-2" strokeLinejoin="round" /></svg>
        <Fit w={121} className="text-[14.500px] font-medium">See Homes for Sale</Fit>
      </div>
      <div className="absolute right-[10px] bottom-[30px] flex h-[90px] w-[30px] flex-col divide-y divide-[#ddd] rounded bg-white shadow-[0_0_0_2px_rgba(0,0,0,.1)]">
        <div className="flex flex-1 items-center justify-center"><Plus className="size-4 text-[#333]" strokeWidth={4} /></div>
        <div className="flex flex-1 items-center justify-center"><div className="h-[3px] w-3 rounded bg-[#333]" /></div>
        <div className="flex flex-1 items-center justify-center">
          <svg viewBox="0 0 8 18" className="h-[18px] w-2"><path d="M4 0 8 8H0Z" fill="#333" /><path d="M4 18 8 10H0Z" fill="#ccc" /></svg>
        </div>
      </div>
      <div className={"absolute right-0 bottom-0 flex h-5 items-center gap-[6px] bg-white/50 pr-[5px] pl-[5px] text-[12px] text-[#404040] " + LATO}>
        <Fit w={155}>© Mapbox © OpenStreetMap</Fit>
        <Fit w={90} className="font-bold">Improve this map</Fit>
      </div>
    </>
  );
}

function Page() {
  return (
    <div className="relative flex h-[937px] overflow-hidden bg-white">
      <main className="w-[1903px]">
        <div className={"flex h-[100px] justify-between overflow-hidden pr-[381px] pl-[382px] " + LATO}>
          <div className="-mt-[14px] flex flex-col items-start text-[25px] leading-[31px]">
            <Fit w={213} className="text-[31px] leading-[33px] text-[#00a3d1]">PLAINFIELD, NJ</Fit>
            <Fit w={450} className="text-black">REAL ESTATE &amp; DEMOGRAPHIC DATA</Fit>
          </div>
          <div className="-mt-3 flex gap-1 text-[#00a3d1]">
            <div className="flex h-[33px] w-20 items-center justify-center gap-0.5 border border-[#1aa3c9]"><FaThumbtack className="size-3" /><span className="text-[16px]">SAVE</span></div>
            <div className="flex h-[33px] w-[58px] items-center justify-center border border-[#1aa3c9]"><FaEnvelope className="size-4" /></div>
            <div className="flex h-[33px] w-[58px] items-center justify-center gap-1.5 border border-[#1aa3c9]"><FaShareAlt className="size-4" /><FaCaretDown className="size-3" /></div>
          </div>
        </div>
        <NavTabs />
        <div className="flex">
          <div className="relative"><MapView /><MapOverlays /></div>
          <Sidebar />
        </div>
        <div className="flex h-[61px] items-start pl-[170px] pt-px text-[14px] text-black">
          <Fit w={47} className={LATO + " leading-6"}>Highest</Fit>
          <div className="ml-[12px] flex w-[500px] border border-[#dfe3e8]">
            {legend.map((c) => <div key={c} className={"h-[20px] flex-1 border-r-[2px] border-[#dfe3e8] last:border-r-0 " + c} />)}
          </div>
          <Fit w={42} className={LATO + " ml-[13px] leading-6"}>Lowest</Fit>
        </div>
        <div className="relative flex h-[71px] items-center justify-between bg-[#ec6b45] pr-[29px] pl-[29px] font-['Liberation_Sans',Arial,sans-serif] text-[16px] text-white">
          <p className="whitespace-pre"><Fit w={696}>We use cookies to improve your experience. By continuing to use this site, you accept our revised </Fit><Fit w={98} className="underline underline-offset-2">Privacy Policy</Fit> and <Fit w={94} className="underline underline-offset-2">Terms of Use.</Fit></p>
          <div className="flex h-[39px] w-[140px] items-center justify-center rounded-[5px] bg-[#f5d84a] text-[14.500px] text-black">Okay</div>
          <div className="absolute top-[-10px] right-[20px] flex size-[60px] items-center justify-center rounded-full rounded-tr-[6px] bg-[#47a3ec] shadow-lg">
            <svg viewBox="0 0 24 18" className="h-[18px] w-6"><path d="M5 0h14q5 0 5 4v10q0 4-5 4H0V4q0-4 5-4Z" fill="#fff" /><path d="M5 6.500h15M5 11.500h9" stroke="#47a3ec" strokeWidth="2" /></svg>
          </div>
        </div>
      </main>
      <div className="flex w-[17px] flex-col items-center bg-[#f1f1f1] pt-[7px] pb-[7px]">
        <svg viewBox="0 0 8 4" className="h-1 w-2"><path d="M4 0 8 4H0Z" fill="#505050" /></svg>
        <div className="mt-[58px] h-[246px] w-[13px] bg-[#c1c1c1]" />
        <svg viewBox="0 0 8 4" className="mt-auto h-1 w-2"><path d="M0 0h8L4 4Z" fill="#505050" /></svg>
      </div>
    </div>
  );
}

/* ---------------- Taskbar ---------------- */

function OfficeIcon({ letter, box, a, b, c, d }: { letter: string; box: string; a: string; b: string; c: string; d: string }) {
  return (
    <svg viewBox="0 0 24 22" className="h-[22px] w-6">
      <path d="M6 0h9v11H6z" fill={b} /><path d="M15 0h9v5.500h-9z" fill={a} /><path d="M15 5.500h9V11h-9z" fill={c} /><path d="M6 11h18v11H6z" fill={d} /><path d="M15 11h9v5.500h-9z" fill={b} />
      <rect y="4" width="14" height="14" rx="1" fill={box} />
      <text x="7" y="15" textAnchor="middle" fontSize="11" fontWeight="700" fontFamily="Open Sans" fill="#fff">{letter}</text>
    </svg>
  );
}
const taskIcons: { node: ReactNode; line?: boolean; split?: boolean; active?: boolean }[] = [
  { node: <svg viewBox="0 0 16 16" className="size-4"><circle cx="8" cy="8" r="6.700" fill="none" stroke="#fff" strokeWidth="2" /></svg> },
  { node: <svg viewBox="0 0 17 16" className="h-4 w-[17px]" fill="none" stroke="#eee" strokeWidth="1.200"><path d="M1 .5v2.500h10V.5M1 15.500V13h10v2.500M1 5.500h10v5H1zM14.500 0v3M14.500 8v8" /><path d="M13 5h3v2.500h-3z" fill="#fff" stroke="none" /></svg> },
  { active: true, line: true, node: <svg viewBox="0 0 24 24" className="size-[23px]"><circle cx="12" cy="12" r="12" fill="#db4437" /><path d="M12 12 1.600 6A12 12 0 0 0 11 24l5-9Z" fill="#0f9d58" /><path d="M12 6.500h10.600A12 12 0 0 1 11 24l6-10Z" fill="#ffcd40" /><circle cx="12" cy="12" r="5.500" fill="#f1f1f1" /><circle cx="12" cy="12" r="4.400" fill="#4285f4" /></svg> },
  { node: <svg viewBox="0 0 22 18" className="h-[18px] w-[22px]"><path d="M0 0h9l1 2h12v16H0z" fill="#fcc93f" /><path d="M0 0h9l1 3H0z" fill="#dc9a10" /><path d="M0 5h22v13H0z" fill="#fdd663" /><path d="M4 18v-8h14v8h-4v-4H8v4Z" fill="#3d9be0" /></svg> },
  { node: <svg viewBox="0 0 24 23" className="h-[23px] w-6"><path d="M8 7V3.500q0-3 4-3t4 3V7" fill="none" stroke="#fff" strokeWidth="1.300" /><path d="M.5 6h23v14q0 3-3 3h-17q-3 0-3-3Z" fill="#fff" /><path d="M6.500 9h5v5h-5z" fill="#f25022" /><path d="M12.500 9h5v5h-5z" fill="#7fba00" /><path d="M6.500 15h5v5h-5z" fill="#00a4ef" /><path d="M12.500 15h5v5h-5z" fill="#ffb900" /></svg> },
  { line: true, split: true, node: <OfficeIcon letter="X" box="#107c41" a="#33c481" b="#21a366" c="#107c41" d="#185c37" /> },
  { line: true, node: <div className="relative"><OfficeIcon letter="O" box="#0072c6" a="#50d9ff" b="#28a8ea" c="#0f6cbd" d="#0a5ea8" /><svg viewBox="0 0 15 11" className="absolute -right-1 -bottom-1 h-[11px] w-[15px]"><path d="M0 0h15v11H0z" fill="#ebb673" /><path d="m1 1 6.500 6L14 1" fill="none" stroke="#fff" strokeWidth="1.400" /></svg></div> },
  { line: true, split: true, node: <OfficeIcon letter="W" box="#185abd" a="#41a5ee" b="#2b7cd3" c="#2b7cd3" d="#103f91" /> },
  { line: true, node: <svg viewBox="0 0 24 24" className="size-6"><rect width="24" height="24" fill="#000" /><path d="M8 4h3v16H8zM13 4h3v16h-3z" fill="#b1060f" /><path d="M8 4h3l5 16h-3z" fill="#e50914" /></svg> },
];

function SearchGlyph() {
  return <svg viewBox="0 0 17 17" className="size-[17px]" fill="none" stroke="#fff" strokeWidth="1.300"><circle cx="10.500" cy="6.500" r="5.500" /><path d="M6.500 10.500 1 16" /></svg>;
}
function Clock() {
  return (
    <div className="flex flex-col items-center text-[12px] leading-[18px] text-white">
      <Fit w={42}>8:43 PM</Fit>
      <Fit w={52}>1/27/2020</Fit>
    </div>
  );
}
function Taskbar({ search, children }: { search: boolean; children: ReactNode }) {
  return (
    <div className={"flex h-10 items-center bg-[#242120] " + UI}>
      <div className={"flex w-12 items-center " + (search ? "pl-[15px]" : "justify-center")}>
        <svg viewBox="0 0 17 17" className="size-[17px]" fill="#fff"><path d="M0 2.300 7.300 1.300V8H0ZM8.200 1.200 17 0v8H8.200ZM0 8.900h7.300v6.700L0 14.600ZM8.200 8.900H17V17l-8.800-1.200Z" /></svg>
      </div>
      {search ? (
        <div className="flex h-10 w-[344px] items-center gap-[11px] border border-[#5a5a5a] bg-[#323130] pl-[11px] text-[15px] text-[#cfcfcf]">
          <SearchGlyph /><Fit w={128}>Type here to search</Fit>
        </div>
      ) : (
        <div className="flex w-12 justify-center"><SearchGlyph /></div>
      )}
      {taskIcons.map((t, i) => (
        <div key={i} className={"flex h-10 w-[49.100px] flex-col items-center justify-end " + (t.active ? "bg-[#4e4c4b]" : "")}>
          <div className="flex flex-1 items-center justify-center pt-0.5">{t.node}</div>
          <div className={"h-0.5 " + (t.line ? "bg-[#76dcff] " : "") + (t.active ? "w-full" : t.split ? "w-10 border-r-[9px] border-[#5fa7bd]" : "w-10")} />
        </div>
      ))}
      {children}
    </div>
  );
}

function Tray() {
  const s = { fill: "none", stroke: "#f0f0f0", strokeWidth: 1.2 } as const;
  return (
    <div className="ml-auto flex h-full items-center">
      <svg viewBox="0 0 12 8" className="mr-[10px] h-2 w-3" {...s}><path d="m1 7 5-5 5 5" /></svg>
      <svg viewBox="0 0 16 11" className="mr-[8px] h-[11px] w-4"><path d="M3 10a3 3 0 0 1 0-6 5 4 0 0 1 9-1 3.500 3.500 0 0 1 1 7Z" fill="#f5f5f5" /><path d="M3 4a5 4 0 0 1 9-1L7 7Z" fill="#aaa" /></svg>
      <svg viewBox="0 0 17 14" className="mr-[8px] h-3.5 w-[17px]" {...s}><path d="M5 1h11v8H4M1 1h4v4H1zM3 5v8h10M9 9v4" /></svg>
      <svg viewBox="0 0 17 12" className="mr-[8px] h-3 w-[17px]" {...s}><path d="M5 2h10v8H5V7M15 5h1.500v2M1 1v3h4V1M3 4v4h3" /><path d="M7 4h6v4H7z" fill="#f0f0f0" /></svg>
      <svg viewBox="0 0 17 14" className="mr-[10px] h-3.5 w-[17px]" {...s}><path d="M1 5h2l4-4v12L3 9H1zM9.500 5q1.500 2 0 4M11.500 3q3 4 0 8M13.500 1q5 6 0 12" /></svg>
      <Clock />
      <svg viewBox="0 0 17 16" className="ml-[17px] h-4 w-[17px]" {...s}><path d="M1 1h15v11h-5l-2.500 3v-3H1z" /></svg>
      <div className="ml-[20px] h-10 w-px bg-[#666]" />
      <div className="w-1" />
    </div>
  );
}

export default function App() {
  return (
    <div className="flex h-[1080px] w-[3840px] overflow-hidden bg-black">
      <div className="flex w-[1920px] flex-col">
        <div className={UI}>
          <TabStrip />
          <Toolbar />
          <BookmarkBar />
        </div>
        <Page />
        <Taskbar search><Tray /></Taskbar>
      </div>
      <div className="flex w-[1920px] flex-col justify-between">
        <WindowButtons className="h-8 justify-end gap-[35px] pr-[18px] text-[#6a6a6a]" />
        <Taskbar search={false}><div className="ml-auto pr-[7px]"><Clock /></div></Taskbar>
      </div>
    </div>
  );
}
